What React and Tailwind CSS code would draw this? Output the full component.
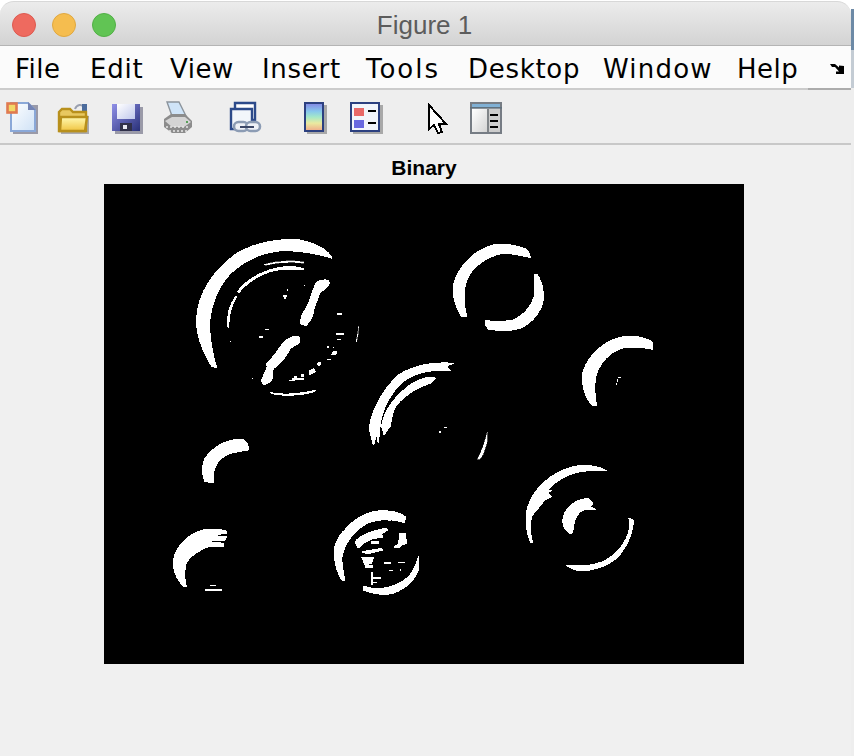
const rects = (list) => list.map((r, i) => <rect key={i} x={r[0]} y={r[1]} width={r[2]} height={r[3]} stroke="none" />);

function Binary() {
  return (
    <svg viewBox="104 184 640 480" width="640" height="480" className="block bg-black" fill="#fff" stroke="#fff" strokeWidth="3" shapeRendering="crispEdges">
      <g transform="translate(170 220) scale(0.33333)">
        <path d="M140 442 L125 440 C95 390 78 340 80 300 C82 220 130 150 200 100 C260 65 330 55 390 60 C440 70 475 90 487 115 L470 110 C430 100 390 92 340 92 C270 96 205 130 165 180 C130 230 114 290 120 340 C124 380 132 420 140 442Z" />
        <path d="M283 133 C320 122 370 120 402 126 L402 130 C360 124 320 128 285 136Z" strokeWidth="1" />
        <path d="M202 215 C230 175 290 145 345 140 C365 138 385 141 402 146 L400 150 C370 146 330 146 300 155 C260 170 230 190 207 218Z" />
        <path d="M198 228 C178 255 170 285 174 322 L177 322 C175 290 185 255 200 232Z" />
        <path d="M438 188 C450 180 472 176 478 185 C477 202 462 212 452 215 C445 230 438 250 432 268 C430 288 418 308 408 317 L393 312 C390 295 397 280 405 270 C420 245 428 210 438 188Z" />
        <path d="M375 348 L388 350 L390 368 L372 378 L362 385 C350 405 335 430 312 445 L306 458 L308 475 L300 487 L282 495 L274 484 L282 462 L292 440 L288 432 C305 418 322 392 338 370 C350 358 362 350 375 348Z" />
        <path d="M300 517 C340 528 400 520 438 510 L436 514 C400 526 340 530 302 520Z" />
        <path d="M566 318 L564 345 L560 366 L558 366 L563 340Z" strokeWidth="1" />
        <path d="M484 405 L490 393 L500 395 L497 405Z" />
        <path d="M418 452 L432 446 L436 456 L420 464Z" />
        <path d="M442 430 L452 426 L452 434 L445 438Z" />
        {rects([[340,225,12,5],[342,230,6,6],[350,208,5,4],[401,194,5,4],[500,280,16,5],[497,340,24,4],[502,358,10,3],[285,326,12,4],[268,349,10,4],[180,362,3,3],[472,378,4,6],[488,380,4,3],[470,417,14,4],[365,473,36,6],[372,467,8,6],[392,463,10,8],[358,480,16,4],[247,473,3,3]])}
      </g>
      <g transform="translate(360 230) scale(0.33333)">
        <path d="M320 258 L305 260 C285 230 275 190 282 160 C295 110 340 60 400 45 C440 38 490 50 505 62 L512 83 C490 78 465 72 440 70 C400 70 352 98 328 135 C310 165 307 210 320 258Z" />
        <path d="M522 133 L532 133 C545 155 552 180 550 210 C545 240 520 280 480 295 C450 305 410 302 385 297 L376 285 L376 270 C395 276 430 276 458 270 C488 258 512 232 522 200 C526 175 525 150 522 133Z" />
        <path d="M710 527 L695 525 C675 500 665 470 668 430 C680 380 730 330 790 320 C830 315 865 325 878 338 L878 358 C850 352 820 350 790 354 C752 362 718 400 707 440 C702 470 705 500 710 527Z" />
        <path d="M40 645 L35 625 L28 600 C30 550 65 480 115 435 C160 405 220 395 282 400 L260 408 L272 422 C220 418 170 425 130 455 C90 490 65 540 60 590 L55 640 L48 605 L44 640Z" />
        <path d="M72 615 L65 590 C70 540 110 490 160 458 C185 445 210 438 228 445 L215 458 C180 470 140 490 110 525 C95 545 95 575 90 590Z" />
        <path d="M382 606 L382 630 C378 655 368 675 360 688 L352 688 C365 665 375 635 382 606Z" strokeWidth="1" />
        {rects([[775,441,8,3],[771,447,4,8],[768,458,4,6],[236,603,8,5],[252,591,8,3]])}
      </g>
      <g transform="translate(160 430) scale(0.33333)">
        <path d="M160 158 L135 155 C125 135 125 105 135 85 C155 55 190 30 240 27 C258 28 266 40 265 60 C240 65 212 66 192 80 C172 95 156 115 160 158Z" />
        <path d="M80 470 L70 468 C50 450 38 420 40 390 C50 345 85 310 130 300 C155 295 185 298 200 304 L200 310 L150 316 L200 320 L195 330 L140 334 L190 340 L190 350 L150 348 C112 364 88 380 77 404 C74 424 72 450 80 470Z" />
        <path d="M555 452 L545 450 C530 425 520 390 524 350 C535 310 580 260 640 245 C680 238 720 245 738 262 L732 278 C700 267 660 265 622 280 C582 302 552 342 545 385 C547 410 550 430 555 452Z" />
        <path d="M776 378 L775 420 C765 450 740 475 700 490 C670 497 630 490 610 480 L610 468 L640 476 C680 478 728 462 752 432 C766 412 770 395 776 378Z" />
        <path d="M585 335 C600 315 640 300 680 295 L684 300 L665 312 L670 322 L640 325 L610 340 L595 355Z" />
        <path d="M720 310 L735 310 L740 340 L725 345 L720 352 L702 352 L715 340 L718 325Z" />
        <path d="M605 365 L665 355 L670 360 L620 372Z" />
        <path d="M605 382 L640 382 L635 400 L615 405Z" />
        {rects([[150,465,18,3],[135,478,52,4],[632,332,24,10],[615,405,25,10],[632,425,8,40],[640,440,22,6],[640,455,10,4],[672,396,20,5],[715,396,20,4],[688,420,10,4],[720,418,3,4],[685,270,8,2]])}
      </g>
      <g transform="translate(510 450) scale(0.33333)">
        <path d="M68 278 L62 278 C50 250 45 215 50 185 C60 130 110 70 190 50 C225 42 270 48 290 63 C260 62 220 60 190 70 C150 85 125 105 115 120 L125 122 L112 128 L125 140 L105 150 L85 175 L72 190 L65 200 C58 230 62 255 68 278Z" />
        <path d="M182 252 C165 245 155 225 160 200 C170 165 205 145 235 146 L250 160 L240 170 L258 178 L240 180 L225 178 C205 185 195 205 190 225 C190 238 190 248 182 252Z" />
        <path d="M357 205 L370 210 C370 240 355 290 320 325 C290 350 240 365 205 362 C190 358 175 352 168 345 C195 350 235 350 275 336 C320 316 350 278 358 235Z" />
      </g>
    </svg>
  );
}

function Icon({ ml, children }) {
  return (
    <svg viewBox="0 0 36 36" width="36" height="36" className={`block shrink-0 ${ml}`}>
      {children}
    </svg>
  );
}

function Toolbar() {
  return (
    <div className="flex h-[55px] items-start border-b-2 border-[#c8c8c8] bg-[#eeeeee] pt-[10px]">
      <Icon ml="ml-[4px]">
        <defs>
          <linearGradient id="pg" x1="0" y1="0" x2="1" y2="1"><stop offset="0" stopColor="#ffffff" /><stop offset="1" stopColor="#cfe2f6" /></linearGradient>
        </defs>
        <path d="M9 5H34V34H9Z" fill="#9a9aa8" />
        <path d="M7 3H24L31 10V31H7Z" fill="url(#pg)" stroke="#8aa8d8" strokeWidth="2" />
        <path d="M24 2L32 10H24Z" fill="#7484b4" />
        <rect x="3.5" y="3.5" width="9" height="9" fill="#f2d868" stroke="#e07a50" strokeWidth="2.6" />
      </Icon>
      <Icon ml="ml-[16px]">
        <defs>
          <linearGradient id="fg" x1="0" y1="0" x2="0" y2="1"><stop offset="0" stopColor="#fff9b0" /><stop offset="1" stopColor="#f0c440" /></linearGradient>
        </defs>
        <path d="M19 9C21 4 26 4 28 7" fill="none" stroke="#9aa0b0" strokeWidth="2" />
        <path d="M26 4H31V11H26Z" fill="#4c6c9c" />
        <path d="M5 34H33V16H5Z" fill="#aaaab0" />
        <path d="M3 12L6 9H14L17 12H30V31H3Z" fill="#e8c860" stroke="#b8901c" strokeWidth="2.4" />
        <path d="M5 17H31L29 31H4Z" fill="url(#fg)" stroke="#b8901c" strokeWidth="2.4" />
      </Icon>
      <Icon ml="ml-[18px]">
        <defs>
          <linearGradient id="sg" x1="0" y1="0" x2="1" y2="1"><stop offset="0" stopColor="#9090e8" /><stop offset="1" stopColor="#283078" /></linearGradient>
          <linearGradient id="sl" x1="0" y1="0" x2="1" y2="1"><stop offset="0" stopColor="#ffffff" /><stop offset="1" stopColor="#c0c8ec" /></linearGradient>
        </defs>
        <path d="M5 7H33V34H5Z" fill="#9a9aa8" />
        <path d="M2 4H30V31H2Z" fill="url(#sg)" />
        <path d="M7 4H25V19H7Z" fill="url(#sl)" />
        <path d="M10 23H22V31H10Z" fill="#303048" />
        <path d="M13 25H17V29H13Z" fill="#e8e8f0" />
      </Icon>
      <Icon ml="ml-[16px]">
        <path d="M5 2H17L24 16H10Z" fill="#cfe4f8" stroke="#8c949c" strokeWidth="1.4" />
        <path d="M2 19L9 14H23L30 21V27L23 33H10L2 27Z" fill="#8c8c8c" />
        <path d="M3 21L10 17H23L29 22L22 27H10Z" fill="#d4d4d4" />
        <path d="M4 27H28M7 31H25" stroke="#e8e8e8" strokeWidth="1.6" strokeDasharray="2 2" />
        <rect x="24" y="21" width="2" height="2" fill="#58a058" />
      </Icon>
      <Icon ml="ml-[30px]">
        <path d="M7 3H27V20H7Z" fill="#ffffff" stroke="#2c4a8a" strokeWidth="2.4" />
        <path d="M3 9H24V29H3Z" fill="#f2f6fb" stroke="#2c4a8a" strokeWidth="2.4" />
        <rect x="6" y="22" width="14" height="9" rx="4.5" fill="#eef1f6" stroke="#8c9cb4" strokeWidth="2.6" />
        <rect x="18" y="22" width="14" height="9" rx="4.5" fill="#eef1f6" stroke="#8c9cb4" strokeWidth="2.6" />
        <rect x="12" y="26" width="14" height="2" fill="#3c4868" />
      </Icon>
      <Icon ml="ml-[38px]">
        <defs>
          <linearGradient id="cb" x1="0" y1="0" x2="0" y2="1">
            <stop offset="0" stopColor="#8484e4" /><stop offset="0.3" stopColor="#88c8ec" /><stop offset="0.5" stopColor="#a4e8c8" /><stop offset="0.72" stopColor="#eaeaa0" /><stop offset="1" stopColor="#f0a888" />
          </linearGradient>
        </defs>
        <path d="M5 5H25V34H5Z" fill="#a8a8a8" />
        <path d="M3 3H21V31H3Z" fill="url(#cb)" stroke="#2c4080" strokeWidth="2" />
      </Icon>
      <Icon ml="ml-[10px]">
        <path d="M5 5H35V34H5Z" fill="#a8a8a8" />
        <path d="M3 3H31V31H3Z" fill="#f2f5fb" stroke="#2c4080" strokeWidth="2" />
        <rect x="6" y="8" width="10" height="8" fill="#e86868" />
        <rect x="6" y="20" width="10" height="8" fill="#6868e0" />
        <rect x="20" y="10" width="8" height="2" fill="#000" />
        <rect x="20" y="22" width="8" height="2" fill="#000" />
      </Icon>
      <Icon ml="ml-[40px]">
        <path d="M5 5V29L10 25L14 33L18 32L15 24H22Z" fill="#fff" stroke="#000" strokeWidth="2" shapeRendering="crispEdges" />
      </Icon>
      <Icon ml="ml-[8px]">
        <defs>
          <linearGradient id="pn" x1="0" y1="0" x2="1" y2="1"><stop offset="0" stopColor="#ffffff" /><stop offset="1" stopColor="#d4d4d4" /></linearGradient>
        </defs>
        <rect x="3" y="3" width="30" height="30" fill="#cccccc" stroke="#767c84" strokeWidth="2" />
        <rect x="4" y="4" width="28" height="3" fill="#80b0d4" />
        <rect x="2" y="7" width="32" height="1.6" fill="#60707c" />
        <rect x="4" y="9" width="15" height="23" fill="url(#pn)" />
        <rect x="19" y="9" width="2" height="23" fill="#808488" />
        <rect x="22" y="14" width="8" height="2" fill="#000" />
        <rect x="22" y="20" width="8" height="2" fill="#000" />
        <rect x="22" y="26" width="8" height="2" fill="#000" />
      </Icon>
    </div>
  );
}

const menu = [
  ["File", "w-[75px]", ""],
  ["Edit", "w-[80px]", "tracking-[0.8px]"],
  ["View", "w-[92px]", ""],
  ["Insert", "w-[104px]", "tracking-[0.7px]"],
  ["Tools", "w-[102px]", "tracking-[2px]"],
  ["Desktop", "w-[135px]", "tracking-[0.7px]"],
  ["Window", "w-[134px]", "tracking-[1.2px]"],
  ["Help", "w-[93px]", ""],
];

export default function App() {
  return (
    <div className="flex h-[756px] w-[854px] overflow-hidden bg-white">
      <div className="flex w-[851px] shrink-0 flex-col">
        <div className="relative mt-[1px] flex h-[45px] items-center justify-center rounded-t-[14px] border-t border-b border-t-[#d8d8d8] border-b-[#b4b4b4] bg-gradient-to-b from-[#ececec] to-[#d3d3d3] pt-[3px]">
          <div className="absolute top-[11px] left-[12px] flex gap-[16px]">
            <div className="h-[24px] w-[24px] rounded-full border border-[#dd5a50] bg-[#ee6a5f]" />
            <div className="h-[24px] w-[24px] rounded-full border border-[#e0a840] bg-[#f5bd4f]" />
            <div className="h-[24px] w-[24px] rounded-full border border-[#52b046] bg-[#61c454]" />
          </div>
          <span className="mr-[2px] text-[26px] leading-none text-[#5c5c5c] [font-family:'Liberation_Sans',sans-serif]">Figure 1</span>
        </div>
        <div className="relative flex h-[44px] items-center border-b-2 border-[#cccccc] bg-[#fbfbfb] pt-[3px] pl-[15px] text-[26px] leading-none tracking-[0.5px] text-black [font-family:'DejaVu_Sans',sans-serif]">
          {menu.map(([t, w, s]) => (
            <span key={t} className={`block shrink-0 ${w} ${s}`}>{t}</span>
          ))}
          <svg viewBox="0 0 14 10" width="14" height="10" className="block shrink-0">
            <path d="M0 0H5L9 3.5V1.5L14 2V10H6V7.5H9L5 3H2Z" fill="#000" />
          </svg>
          <div className="absolute right-0 bottom-[-2px] h-[2px] w-[43px] bg-[#acacac]" />
        </div>
        <Toolbar />
        <div className="flex-1 bg-[#f0f0f0] pl-[104px]">
          <div className="flex h-[39px] w-[640px] items-center justify-center pt-[6px] text-[21px] leading-none font-bold text-black [font-family:'Liberation_Sans',sans-serif]">Binary</div>
          <Binary />
        </div>
      </div>
      <div className="flex w-[3px] shrink-0 flex-col">
        <div className="h-[9px] bg-white" />
        <div className="h-[41px] bg-[#6d8aa6]" />
        <div className="h-[38px] bg-[#c4ccd4]" />
        <div className="flex-1 bg-[#eeeeee]" />
      </div>
    </div>
  );
}
